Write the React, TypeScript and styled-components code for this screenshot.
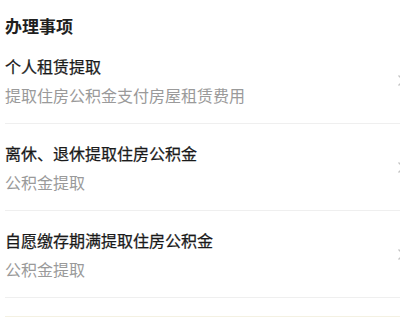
import React from "react";
import styled, { createGlobalStyle } from "styled-components";

const Global = createGlobalStyle`
  html, body { margin: 0; padding: 0; background: #ffffff; }
  body { font-family: "Noto Sans CJK SC", "Noto Sans", sans-serif; }
`;

const Page = styled.div`
  width: 400px;
  height: 317px;
  overflow: hidden;
  background: #ffffff;
  padding: 15px 0 0 5px;
  box-sizing: border-box;
`;

const Heading = styled.h2`
  margin: 0;
  font-size: 17px;
  line-height: 22px;
  font-weight: 700;
  color: #1f1f1f;
`;

const List = styled.div`
  width: 400px;
  display: flex;
  flex-direction: column;
`;

const Item = styled.div`
  display: flex;
  align-items: center;
  padding: 17px 0 17px 0;
  border-bottom: 1px solid #efefef;
`;

const Texts = styled.div`
  flex: 1;
  display: flex;
  flex-direction: column;
  gap: 6px;
`;

const Title = styled.div`
  font-size: 16px;
  line-height: 24px;
  color: #1a1a1a;
  -webkit-text-stroke: 0.25px #1a1a1a;
`;

const Sub = styled.div`
  font-size: 16px;
  line-height: 22px;
  color: #9a9a9a;
`;

const Chevron = styled.svg`
  width: 8px;
  height: 13px;
  flex: none;
`;

const Footer = styled.div`
  width: 400px;
  margin-top: 18px;
  border-top: 2px solid #f4f1e2;
`;

const items = [
  { title: "个人租赁提取", sub: "提取住房公积金支付房屋租赁费用" },
  { title: "离休、退休提取住房公积金", sub: "公积金提取" },
  { title: "自愿缴存期满提取住房公积金", sub: "公积金提取" },
];

export default function App() {
  return (
    <>
      <Global />
      <Page>
        <Heading>办理事项</Heading>
        <List>
          {items.map((it) => (
            <Item key={it.title}>
              <Texts>
                <Title>{it.title}</Title>
                <Sub>{it.sub}</Sub>
              </Texts>
              <Chevron viewBox="0 0 8 13">
                <polyline points="1.5,1.5 6.5,6.5 1.5,11.5" fill="none" stroke="#c4c4c4" strokeWidth="1.3" />
              </Chevron>
            </Item>
          ))}
        </List>
        <Footer />
      </Page>
    </>
  );
}
